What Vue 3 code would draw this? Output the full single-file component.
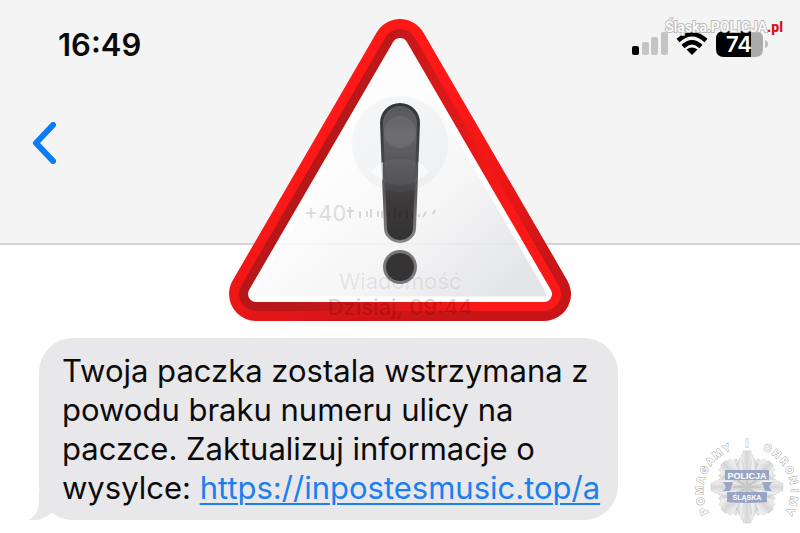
<script setup>
const motto = 'POMAGAMY I CHRONIMY'.split('').map((char, index) => ({
  char,
  turn: `rotate(${(index - 9) * 12.8} 67 66)`,
}))

const diagonalRays = [45, 135, 225, 315]
const mainRays = [0, 90, 180, 270]
</script>

<template>
  <main class="screen">
    <header class="header">
      <div class="status">
        <time class="clock">16:49</time>
        <div class="indicators">
          <svg class="signal" width="36" height="24" viewBox="0 0 36 24" aria-label="Signal">
            <rect x="0" y="14" width="7" height="9" rx="2" fill="#000" />
            <rect x="10" y="10" width="7" height="13" rx="2" fill="#c4c4c4" />
            <rect x="19" y="5" width="7" height="18" rx="2" fill="#c4c4c4" />
            <rect x="29" y="0" width="7" height="23" rx="2" fill="#c4c4c4" />
          </svg>
          <svg class="wifi" width="32" height="24" viewBox="0 0 32 24" aria-label="Wi-Fi">
            <g fill="none" stroke="#000" stroke-width="4.500">
              <path d="M2 8.500 Q16 -4 30 8.500" />
              <path d="M7 14.500 Q16 6 25 14.500" />
            </g>
            <path d="M16 23 L10.500 17.600 Q16 13.200 21.500 17.600 Z" fill="#000" />
          </svg>
          <svg class="battery" width="52" height="26" viewBox="0 0 52 26" aria-label="Battery">
            <path d="M8 0 H35 V26 H8 Q0 26 0 18 V8 Q0 0 8 0 Z" fill="#000" />
            <path d="M35 0 H39 Q47 0 47 8 V18 Q47 26 39 26 H35 Z" fill="#ababab" />
            <path d="M49 9 Q52 10 52 13 Q52 16 49 17 Z" fill="#bdbdbd" />
            <text class="charge" x="23" y="21" text-anchor="middle">74</text>
          </svg>
        </div>
      </div>
      <div class="nav">
        <button class="back" type="button" aria-label="Wstecz">
          <svg width="24" height="42" viewBox="0 0 24 42">
            <path d="M21 3 L4 21 L21 39" fill="none" stroke="#0a7cf8" stroke-width="6" stroke-linecap="round" stroke-linejoin="round" />
          </svg>
        </button>
        <div class="contact">
          <svg class="avatar" width="96" height="96" viewBox="0 0 96 96">
            <circle cx="48" cy="48" r="48" fill="#8b93a8" opacity="0.08" />
            <circle cx="48" cy="36" r="16" fill="#fff" opacity="0.07" />
            <path d="M19 76 Q29 63 48 63 Q67 63 77 76 Q65 89 48 89 Q31 89 19 76 Z" fill="#fff" opacity="0.05" />
            <path d="M19 76 Q24 69 31 66 V84 Q24 81 19 76 Z M77 76 Q72 69 66 66 V84 Q72 81 77 76 Z" fill="#fff" opacity="0.6" />
          </svg>
          <div class="number">
            <span>+40</span>
            <svg width="150" height="20" viewBox="0 0 150 20">
              <path d="M4 4 V15 M1 8 H8 M14 8 V15 M21 8 V14 M25 6 V15 M32 8 V14 M36 8 V15 M43 8 V14 M49 5 V15 M54 8 V14 M61 6 V15 M66 10 V15 M73 11 V14 M80 9 L77 14 M89 7 L87 11" fill="none" stroke="#000" stroke-width="2" />
            </svg>
          </div>
        </div>
      </div>
    </header>

    <section class="thread">
      <p class="stamp">Wiadomość<br /><strong>Dzisiaj, 09:44</strong></p>
      <article class="bubble">
        <svg class="tail" width="34" height="30" viewBox="0 0 34 30">
          <path d="M11 0 V12 Q10 25 0 29 Q13 31 23 22 L34 12 V0 Z" fill="#e8e8ea" />
        </svg>
        <p class="message">
          Twoja paczka zostala wstrzymana z<br />
          powodu braku numeru ulicy na<br />
          paczce. Zaktualizuj informacje o<br />
          wysylce: <a href="#">https://inpostesmusic.top/a</a>
        </p>
      </article>
    </section>

    <svg class="warning" width="342" height="303" viewBox="229 19 342 303" aria-label="Uwaga">
      <defs>
        <linearGradient id="rim" gradientUnits="userSpaceOnUse" x1="350" y1="140" x2="430" y2="320">
          <stop offset="0" stop-color="#ff1818" />
          <stop offset="0.500" stop-color="#ee1616" />
          <stop offset="1" stop-color="#c81518" />
        </linearGradient>
        <linearGradient id="bevel" gradientUnits="userSpaceOnUse" x1="310" y1="240" x2="490" y2="290">
          <stop offset="0" stop-color="#b81719" />
          <stop offset="0.500" stop-color="#dc1819" />
          <stop offset="1" stop-color="#fb1818" />
        </linearGradient>
        <linearGradient id="panel" gradientUnits="userSpaceOnUse" x1="345" y1="160" x2="485" y2="310">
          <stop offset="0" stop-color="#fdfdfd" />
          <stop offset="0.450" stop-color="#f6f6f7" />
          <stop offset="1" stop-color="#e4e5e7" />
        </linearGradient>
        <linearGradient id="mark" x1="0" y1="0" x2="0" y2="1">
          <stop offset="0" stop-color="#555354" />
          <stop offset="0.250" stop-color="#605e5f" />
          <stop offset="0.700" stop-color="#3d3a3b" />
          <stop offset="1" stop-color="#343132" />
        </linearGradient>
        <linearGradient id="edge" x1="0" y1="0" x2="0" y2="1">
          <stop offset="0" stop-color="#2b2d2f" />
          <stop offset="0.500" stop-color="#454647" />
          <stop offset="1" stop-color="#858687" />
        </linearGradient>
      </defs>
      <g stroke-linejoin="round">
        <path d="M400 46 L544 294 L256 294 Z" fill="url(#rim)" stroke="url(#rim)" stroke-width="54" />
        <path d="M400 46 L544 294 L256 294 Z" fill="url(#bevel)" stroke="url(#bevel)" stroke-width="34" />
        <path d="M400 46 L544 294 L256 294 Z" fill="#fff" stroke="#fff" stroke-width="16" />
        <path d="M400 46 L544 294 L256 294 Z" fill="url(#panel)" stroke="url(#panel)" stroke-width="5" />
      </g>
      <path d="M260 244 H540" stroke="#000" stroke-opacity="0.040" />
      <path d="M380 123 A20 20 0 0 1 420 123 L416 228 A16 15 0 0 1 384 228 Z" fill="url(#edge)" />
      <path d="M383 123 A17 17 0 0 1 417 123 L413 228 A13 12 0 0 1 387 228 Z" fill="url(#mark)" />
      <circle cx="400" cy="267" r="17" fill="#777879" />
      <circle cx="400" cy="267" r="14" fill="#363334" />
    </svg>

    <p class="site">Śląska.POLICJA<span>.pl</span></p>

    <svg class="badge" width="120" height="108" viewBox="0 0 120 108" aria-label="Policja Śląska">
      <defs>
        <linearGradient id="silver" x1="0" y1="0" x2="1" y2="0">
          <stop offset="0" stop-color="#cdcdcd" />
          <stop offset="0.250" stop-color="#efefef" />
          <stop offset="0.500" stop-color="#d6d6d6" />
          <stop offset="0.750" stop-color="#f1f1f1" />
          <stop offset="1" stop-color="#c8c8c8" />
        </linearGradient>
      </defs>
      <g class="motto">
        <text v-for="(letter, i) in motto" :key="i" x="67" y="22" text-anchor="middle" :transform="letter.turn">{{ letter.char }}</text>
      </g>
      <g v-for="ray in diagonalRays" :key="ray" :transform="`rotate(${ray} 67 62)`">
        <path d="M67 62 L51 38 H55 V34 H59 V30 H63 L64 28 H70 L71 30 H75 V34 H79 V38 H83 Z" fill="url(#silver)" stroke="#c4c4c4" stroke-width="0.500" />
        <path d="M67 62 L58 36 M67 62 V30 M67 62 L76 36" stroke="#d0d0d0" stroke-width="0.600" fill="none" />
      </g>
      <g v-for="ray in mainRays" :key="ray" :transform="`rotate(${ray} 67 62)`">
        <path d="M67 62 L56 39 L59 38 V34 L61 33 V30 L63 29 V26 H71 V29 L73 30 V33 L75 34 V38 L78 39 Z" fill="url(#silver)" stroke="#c4c4c4" stroke-width="0.500" />
        <path d="M67 62 L62 34 M67 62 L72 34" stroke="#cacaca" stroke-width="0.600" fill="none" />
      </g>
      <path d="M57 55 L77 69 M77 55 L57 69 M67 54 V70 M53 62 H81" stroke="#b4b4b4" stroke-width="1" />
      <path d="M43 57 H53 L50 66 H43 L46 62 Z M92 57 H82 L85 66 H92 L89 62 Z" fill="#9aa7c7" />
      <rect x="45" y="45" width="44" height="10" fill="#98a5c5" />
      <path d="M47 67 H87 V77 Q67 79 47 77 Z" fill="#98a5c5" />
      <circle cx="67" cy="62" r="3" fill="#c9c9c9" />
      <text class="force" x="67" y="54" text-anchor="middle">POLICJA</text>
      <text class="region" x="67" y="75" text-anchor="middle">ŚLĄSKA</text>
    </svg>
  </main>
</template>

<style>
body {
  margin: 0;
  background: #fff;
}
</style>

<style scoped>
.screen {
  position: relative;
  min-height: 100vh;
  overflow: hidden;
  background: #fff;
  color: #0b0b0c;
  font-family: Inter, "Liberation Sans", sans-serif;
}

p {
  margin: 0;
}

.header {
  background: #f4f4f4;
  border-bottom: 2px solid #d4d4d5;
}

.status {
  display: flex;
  align-items: center;
  justify-content: space-between;
  height: 88px;
  padding: 0 32px 0 58px;
}

.clock {
  font-size: 31px;
  font-weight: 600;
}

.indicators {
  display: flex;
  align-items: center;
  gap: 8px;
}

.charge {
  fill: #fff;
  font-size: 22px;
  font-weight: 600;
}

.nav {
  display: grid;
  grid-template-columns: 1fr auto 1fr;
  align-items: start;
  padding: 8px 32px 17px;
}

.back {
  justify-self: start;
  margin-top: 26px;
  padding: 0;
  border: 0;
  background: none;
  cursor: pointer;
}

.back svg,
.contact svg {
  display: block;
}

.contact {
  position: relative;
  z-index: 2;
  display: flex;
  flex-direction: column;
  align-items: center;
  gap: 8px;
}

.number {
  display: flex;
  align-items: center;
  height: 26px;
  font-size: 22px;
  opacity: 0.13;
}

.thread {
  padding: 23px 39px 13px;
}

.stamp {
  position: relative;
  z-index: 2;
  color: rgba(70, 50, 70, 0.1);
  font-size: 22px;
  line-height: 26px;
  text-align: center;
}

.stamp strong {
  color: rgba(60, 0, 0, 0.2);
  font-weight: 500;
}

.bubble {
  position: relative;
  width: fit-content;
  margin-top: 18px;
  padding: 13px 18px 13px 23px;
  border-radius: 34px;
  background: #e8e8ea;
}

.tail {
  position: absolute;
  bottom: -1px;
  left: -11px;
}

.message {
  position: relative;
  font-size: 31px;
  line-height: 39px;
}

.message a {
  color: #1b7ff0;
  text-decoration-thickness: 2px;
  text-underline-offset: 4px;
}

.warning {
  position: absolute;
  z-index: 1;
  top: 19px;
  left: 50%;
  transform: translateX(-50%);
}

.site {
  position: absolute;
  z-index: 3;
  top: 16px;
  right: 17px;
  color: #fff;
  font-family: Roboto, "Noto Sans", sans-serif;
  font-size: 14px;
  font-weight: 500;
  line-height: 22px;
  -webkit-text-stroke: 2px #bdbdbd;
  paint-order: stroke fill;
}

.site span {
  color: #cf1a1e;
  font-weight: 900;
  -webkit-text-stroke: 0;
}

.badge {
  position: absolute;
  right: 0;
  bottom: 0;
}

.motto {
  fill: #fff;
  stroke: #a9a9a9;
  stroke-width: 1px;
  paint-order: stroke;
  font-size: 10px;
  font-weight: 700;
}

.force,
.region {
  fill: #fff;
  font-family: "Liberation Sans", sans-serif;
  font-weight: 700;
}

.force {
  font-size: 9px;
}

.region {
  font-size: 7px;
}
</style>
